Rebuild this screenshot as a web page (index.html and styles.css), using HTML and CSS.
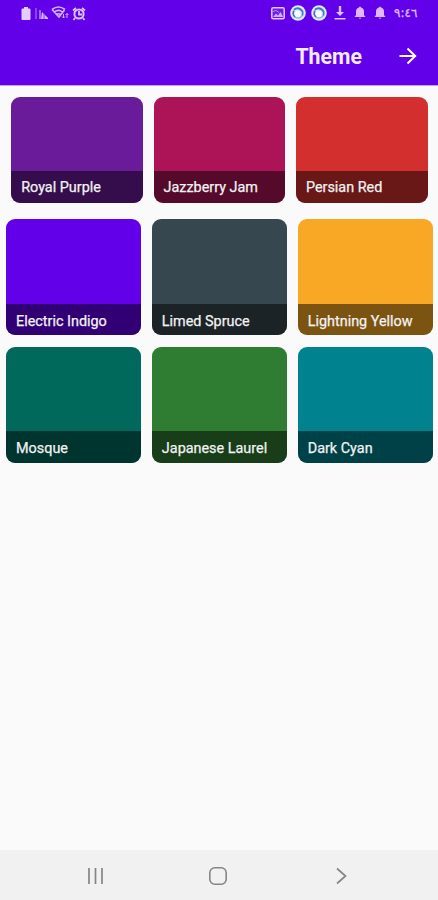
FILE: index.html
```html
<!DOCTYPE html>
<html lang="en">
<head>
<meta charset="utf-8">
<title>Theme</title>
<link rel="stylesheet" href="styles.css">
</head>
<body>
<header class="header">
  <div class="status">
    <div class="status-group">
      <svg class="battery" width="10" height="15" viewBox="0 0 10 15"><path d="M3 1h4v1.500h1.500q1 0 1 1V13q0 1-1 1h-7q-1 0-1-1V3.500q0-1 1-1H3z" fill="#e3ceff"/></svg>
      <svg class="signal" width="14" height="14" viewBox="0 0 14 14"><path d="M1 2v11" stroke="#9160f2" stroke-width="1.500"/><path d="M5 4v9" stroke="#b68cfa" stroke-width="1.500"/><path d="M7 6l6 6v1H6z" fill="#d7bfff"/><path d="M9 7v6" stroke="#7532ea"/></svg>
      <svg class="wifi" width="18" height="16" viewBox="0 0 18 16"><g fill="none" stroke="#cfb1ff" stroke-width="1.700"><path d="M1 4.500q6.500-5 13 0M3.500 7q4-3.200 8 0M5.500 9.500q2-1.500 4 0M1 4.500l7 7.500 5.500-7"/></g><path d="M12.500 9v4M11 11.500l1.500 1.500 1.500-1.500M16 13V8.500M14.500 10L16 8.500l1.500 1.500" fill="none" stroke="#cfb1ff"/></svg>
      <svg class="alarm" width="14" height="15" viewBox="0 0 14 15"><circle cx="7" cy="8" r="4.600" fill="none" stroke="#d9c2ff" stroke-width="2"/><path d="M1 4.500L4 2M10 2l3 2.500M3 12l-1.500 2M11 12l1.500 2M7 5v3.500h3" fill="none" stroke="#d9c2ff" stroke-width="1.800"/></svg>
    </div>
    <div class="status-group">
      <svg class="image" width="14" height="13" viewBox="0 0 14 13"><rect x=".8" y=".8" width="12.400" height="11" rx="1.300" fill="#6c1ce6" stroke="#dec9ff" stroke-width="1.500"/><path d="M2 10l3-3.500 2 2L9.500 5l2.800 5z" fill="#d0adff"/><path d="M2 4.500l3-1 3 2" fill="none" stroke="#b98cf8"/></svg>
      <svg class="orb" width="16" height="16" viewBox="0 0 16 16"><circle cx="8" cy="8" r="7.800" fill="#dcecff"/><circle cx="8" cy="8" r="5" fill="none" stroke="#8eb6e6" stroke-width="1.500"/><circle cx="7.500" cy="9" r="3" fill="#fff"/><path d="M4 4.500q5-3 8.500 2v4M5 12q-3-3-1-6" fill="none" stroke="#4472c4" stroke-width="1.500"/></svg>
      <svg class="orb" width="16" height="16" viewBox="0 0 16 16"><circle cx="8" cy="8" r="7.800" fill="#dcecff"/><circle cx="8" cy="8" r="5" fill="none" stroke="#8eb6e6" stroke-width="1.500"/><circle cx="7.500" cy="9" r="3" fill="#fff"/><path d="M4 4.500q5-3 8.500 2v4M5 12q-3-3-1-6" fill="none" stroke="#4472c4" stroke-width="1.500"/></svg>
      <svg class="download" width="12" height="14" viewBox="0 0 12 14"><path d="M4.800 0h2.400v6H10l-4 4-4-4h2.800zM.5 12h11v1.600H.5z" fill="#d9c1ff"/></svg>
      <svg class="bell" width="12" height="14" viewBox="0 0 12 14"><path d="M5 1.500Q6-.5 7 1.500q3 .8 3 4V9l1.500 2H.5L2 9V5.500q0-3.200 3-4zM4.500 11.700h3Q6 14 4.500 11.700z" fill="#e0b8ff"/></svg>
      <svg class="bell" width="12" height="14" viewBox="0 0 12 14"><path d="M5 1.500Q6-.5 7 1.500q3 .8 3 4V9l1.500 2H.5L2 9V5.500q0-3.200 3-4zM4.500 11.700h3Q6 14 4.500 11.700z" fill="#e0b8ff"/></svg>
      <span class="time" dir="ltr">٩:٤٦</span>
    </div>
  </div>
  <div class="toolbar">
    <h1 class="title">Theme</h1>
    <svg class="arrow" width="20" height="20" viewBox="0 0 20 20"><path d="M1.500 10H17M9.500 2.500L17.200 10l-7.700 7.500" fill="none" stroke="#fff" stroke-width="2"/></svg>
  </div>
</header>
<main class="content">
  <section class="row row-first">
    <div class="card royal"><span class="label">Royal Purple</span></div>
    <div class="card jazz"><span class="label">Jazzberry Jam</span></div>
    <div class="card persian"><span class="label">Persian Red</span></div>
  </section>
  <section class="row">
    <div class="card indigo"><span class="label">Electric Indigo</span></div>
    <div class="card spruce"><span class="label">Limed Spruce</span></div>
    <div class="card yellow"><span class="label">Lightning Yellow</span></div>
  </section>
  <section class="row">
    <div class="card mosque"><span class="label">Mosque</span></div>
    <div class="card laurel"><span class="label">Japanese Laurel</span></div>
    <div class="card cyan"><span class="label">Dark Cyan</span></div>
  </section>
</main>
<nav class="navbar">
  <svg width="20" height="20" viewBox="0 0 20 20"><path d="M4 2v16M10.500 2v16M17 2v16" stroke="#858585" stroke-width="1.700"/></svg>
  <svg width="20" height="20" viewBox="0 0 20 20"><rect x="1.800" y="1.800" width="16.400" height="16.400" rx="5" fill="none" stroke="#858585" stroke-width="1.600"/></svg>
  <svg width="20" height="20" viewBox="0 0 20 20"><path d="M6 2.500l8.500 7.500L6 17.500" fill="none" stroke="#858585" stroke-width="1.700"/></svg>
</nav>
</body>
</html>
```
FILE: styles.css
```css
* { box-sizing: border-box; }

body {
  margin: 0;
  height: 900px;
  display: flex;
  flex-direction: column;
  background: #fafafa;
  font-family: Roboto, "Liberation Sans", sans-serif;
  overflow: hidden;
}

svg { display: block; flex: none; }

.header {
  height: 86px;
  background: #6200ea;
  border-bottom: 1px solid #c8a0fa;
}

.status {
  height: 26px;
  display: flex;
  justify-content: space-between;
  padding: 0 20px 0 21px;
}

.status-group { display: flex; align-items: center; }
.signal { margin-left: 4px; }
.wifi { margin-left: 2px; }
.alarm { margin-left: 3px; }
.orb { margin-left: 5px; }
.download { margin-left: 7px; }
.bell { margin-left: 8px; }

.time {
  margin-left: 8px;
  width: 24px;
  color: #d9bcff;
  font: 12px/20px "DejaVu Sans", sans-serif;
  -webkit-text-stroke: 0.300px #d9bcff;
  white-space: nowrap;
}

.toolbar {
  height: 59px;
  display: flex;
  align-items: center;
  justify-content: flex-end;
  padding-right: 20px;
}

.title {
  margin: 2px 36px 0 0;
  color: #f4ecff;
  font-size: 21.300px;
  font-weight: 700;
  line-height: 26px;
}

.content { flex: 1; padding-top: 10.500px; }

.row {
  display: grid;
  grid-template-columns: repeat(3, 1fr);
  gap: 10.600px;
  height: 116.500px;
  padding: 0 5px 0 6px;
  margin-bottom: 11.300px;
}

.row-first {
  height: 106px;
  padding: 0 10.300px 0 11.200px;
  margin-bottom: 16.300px;
}

.card {
  display: flex;
  flex-direction: column;
  justify-content: flex-end;
  border-radius: 9px;
  overflow: hidden;
}

.label {
  height: 31.700px;
  padding-left: 10px;
  background: rgba(0, 0, 0, 0.5);
  color: #f2f2f2;
  font-size: 14.400px;
  font-weight: 400;
  -webkit-text-stroke: 0.250px #f2f2f2;
  line-height: 35px;
  white-space: nowrap;
}

.row-first .label { line-height: 34px; }

.royal { background: #6a1b9a; }
.jazz { background: #ad1457; }
.persian { background: #d32f2f; }
.indigo { background: #6200ea; }
.spruce { background: #37474f; }
.yellow { background: #f9a825; }
.mosque { background: #00695c; }
.laurel { background: #2e7d32; }
.cyan { background: #00838f; }

.navbar {
  height: 50px;
  display: flex;
  justify-content: space-between;
  align-items: center;
  padding: 1px 87px 0 85px;
  background: #f1f1f1;
}
```
